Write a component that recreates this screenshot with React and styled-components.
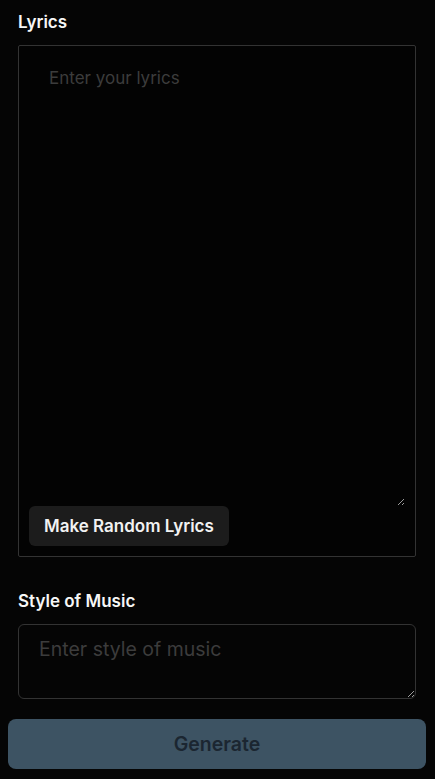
import styled, { createGlobalStyle } from 'styled-components';

const Global = createGlobalStyle`
  html, body {
    margin: 0;
    background: #050505;
  }
  body {
    padding: 8px 9px 8px 8px;
    font-family: Inter, "Noto Sans", sans-serif;
    color: #f5f5f5;
  }
  * { box-sizing: border-box; }
`;

const Form = styled.div`
  display: flex;
  flex-direction: column;
`;

const Section = styled.div`
  display: flex;
  flex-direction: column;
  padding: 0 10px;
  margin-bottom: ${p => p.gap || 0}px;
`;

const Label = styled.label`
  font-size: 17px;
  font-weight: 600;
  line-height: 20px;
  margin: 4px 0 13px;
  color: #f7f7f7;
`;

const LyricsBox = styled.div`
  display: flex;
  flex-direction: column;
  align-items: flex-start;
  height: 512px;
  border: 1px solid #333;
  border-radius: 2px;
  padding: 10px;
  background: #030303;
`;

const Area = styled.textarea`
  width: 100%;
  background: transparent;
  color: #ddd;
  outline: none;
  font-family: inherit;
  font-size: ${p => p.size || 17}px;
  line-height: 24px;
  &::placeholder {
    color: #3c3c3c;
  }
`;

const LyricsArea = styled(Area)`
  flex: 1;
  border: none;
  padding: 10px 20px;
`;

const StyleArea = styled(Area)`
  height: 75px;
  border: 1px solid #333;
  border-radius: 6px;
  padding: 12px 20px;
`;

const RandomButton = styled.button`
  background: #1c1c1c;
  color: #f2f2f2;
  border: none;
  border-radius: 6px;
  height: 40px;
  padding: 0 15px;
  font-family: inherit;
  font-size: 17px;
  font-weight: 600;
  cursor: pointer;
`;

const GenerateButton = styled.button`
  width: 100%;
  height: 50px;
  margin-top: 20px;
  background: #3d5363;
  color: #1b2631;
  border: none;
  border-radius: 8px;
  font-family: inherit;
  font-size: 19.5px;
  font-weight: 600;
`;

export default function App() {
  return (
    <>
      <Global />
      <Form>
        <Section gap={30}>
          <Label>Lyrics</Label>
          <LyricsBox>
            <LyricsArea placeholder="Enter your lyrics" />
            <RandomButton>Make Random Lyrics</RandomButton>
          </LyricsBox>
        </Section>
        <Section>
          <Label>Style of Music</Label>
          <StyleArea size={19.5} placeholder="Enter style of music" />
        </Section>
        <GenerateButton disabled>Generate</GenerateButton>
      </Form>
    </>
  );
}
